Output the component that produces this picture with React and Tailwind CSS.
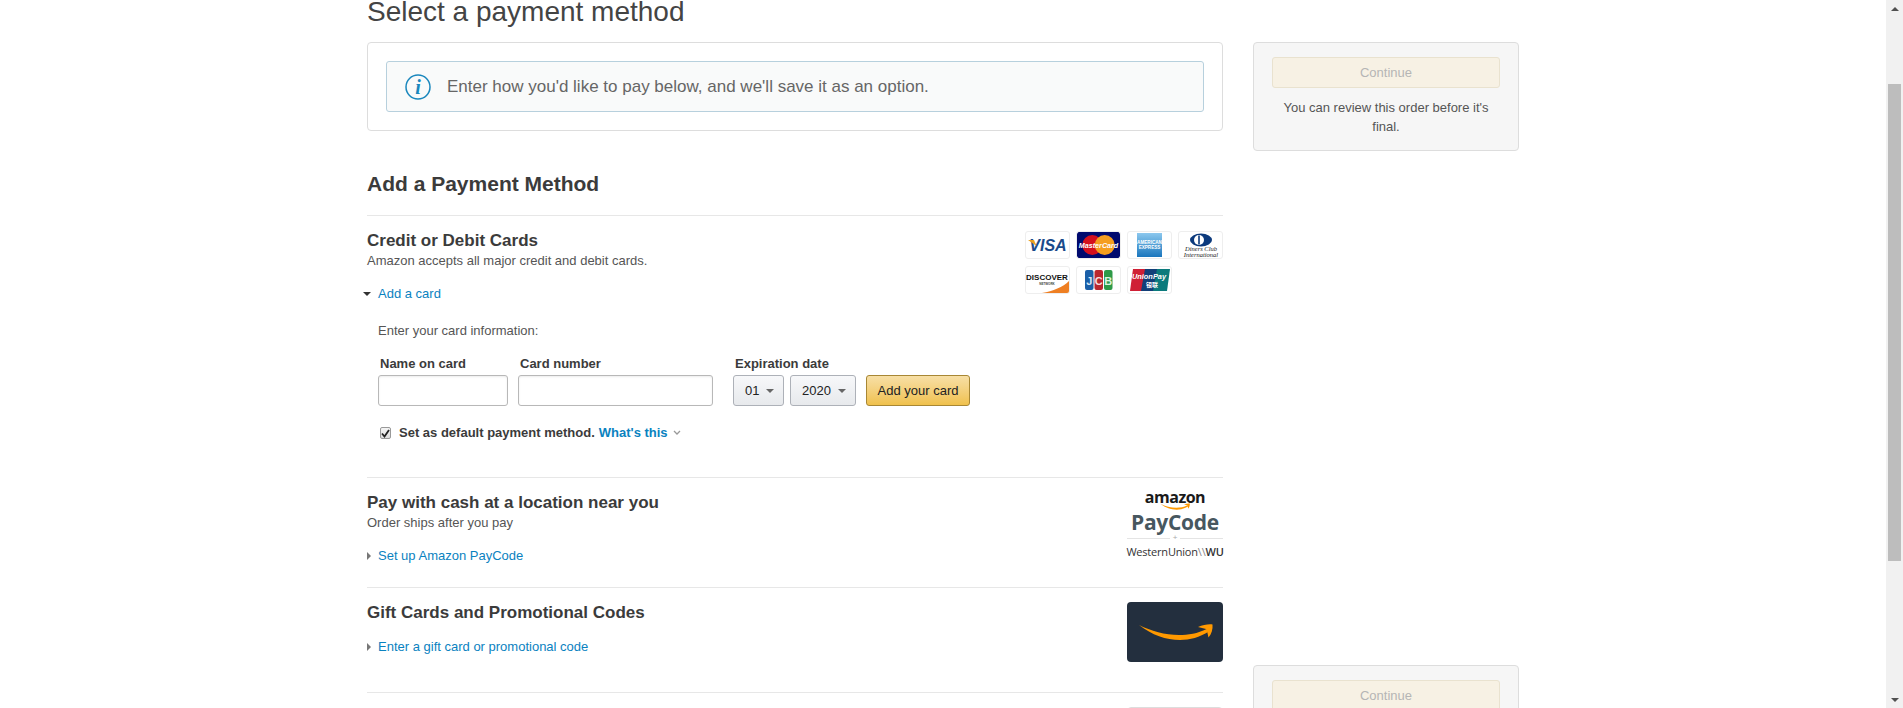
const FONT = "font-['Liberation_Sans',Arial,sans-serif]"

function CardIcon({ children }) {
  return (
    <div className="w-[45px] h-[28px] rounded-[3px] border border-[#eeeeee] bg-white overflow-hidden flex items-center justify-center">
      {children}
    </div>
  )
}

function Visa() {
  return (
    <svg width="43" height="26" viewBox="0 0 43 26">
      <text x="22" y="19" textAnchor="middle" fontFamily="Liberation Sans" fontWeight="700" fontStyle="italic" fontSize="16" fill="#1a4a8a">VISA</text>
      <path d="M2 8h6l2.500 6z" fill="#e8a020" />
    </svg>
  )
}

function MasterCard() {
  return (
    <svg width="45" height="28" viewBox="0 0 45 28">
      <rect width="45" height="28" rx="3" fill="#000a6e" />
      <circle cx="16" cy="14" r="10.5" fill="#d4101e" />
      <circle cx="29" cy="14" r="10.5" fill="#f59e1f" />
      <text x="22.5" y="17" textAnchor="middle" fontFamily="Liberation Sans" fontWeight="700" fontStyle="italic" fontSize="7.5" fill="#fff">MasterCard</text>
    </svg>
  )
}

function Amex() {
  return (
    <svg width="43" height="26" viewBox="0 0 43 26">
      <defs>
        <linearGradient id="amexFill" x1="0" y1="0" x2="0" y2="1">
          <stop offset="0" stopColor="#8cc8ee" />
          <stop offset="1" stopColor="#1a76bd" />
        </linearGradient>
      </defs>
      <rect x="9" y="1" width="25" height="24" fill="url(#amexFill)" />
      <text x="21.5" y="12" textAnchor="middle" fontFamily="Liberation Sans" fontWeight="700" fontSize="4.6" fill="#fff">AMERICAN</text>
      <text x="21.5" y="17" textAnchor="middle" fontFamily="Liberation Sans" fontWeight="700" fontSize="4.6" fill="#fff">EXPRESS</text>
    </svg>
  )
}

function Diners() {
  return (
    <svg width="43" height="26" viewBox="0 0 43 26">
      <ellipse cx="22" cy="8" rx="11" ry="6.5" fill="#0c3a7d" />
      <circle cx="20" cy="8" r="5" fill="#fff" />
      <rect x="19.2" y="3.5" width="1.6" height="9" fill="#0c3a7d" />
      <text x="22" y="19" textAnchor="middle" fontFamily="Liberation Serif" fontStyle="italic" fontSize="6.5" fill="#222">Diners Club</text>
      <text x="22" y="24.5" textAnchor="middle" fontFamily="Liberation Serif" fontStyle="italic" fontSize="6.5" fill="#222">International</text>
    </svg>
  )
}

function Discover() {
  return (
    <svg width="43" height="26" viewBox="0 0 43 26">
      <path d="M43 14v12H16C27 24 37 20 43 14z" fill="#ee7f23" />
      <text x="21" y="13" textAnchor="middle" fontFamily="Liberation Sans" fontWeight="700" fontSize="8" fill="#111">DISCOVER</text>
      <text x="21" y="18" textAnchor="middle" fontFamily="Liberation Sans" fontWeight="700" fontSize="3" fill="#444">NETWORK</text>
    </svg>
  )
}

function Jcb() {
  return (
    <svg width="43" height="26" viewBox="0 0 43 26">
      <rect x="8" y="3" width="8.5" height="20" rx="2" fill="#1b5fa8" />
      <rect x="17.5" y="3" width="8.5" height="20" rx="2" fill="#b9262f" />
      <rect x="27" y="3" width="8.5" height="20" rx="2" fill="#2e9a48" />
      <text x="12.2" y="18" textAnchor="middle" fontFamily="Liberation Sans" fontWeight="700" fontSize="11" fill="#d8e6f5">J</text>
      <text x="21.7" y="18" textAnchor="middle" fontFamily="Liberation Sans" fontWeight="700" fontSize="11" fill="#f5dcdc">C</text>
      <text x="31.2" y="18" textAnchor="middle" fontFamily="Liberation Sans" fontWeight="700" fontSize="11" fill="#dcf5e0">B</text>
    </svg>
  )
}

function UnionPay() {
  return (
    <svg width="43" height="26" viewBox="0 0 43 26">
      <path d="M5 2h14l-4 22H2z" fill="#cf1f35" />
      <path d="M17 2h14l-4 22H13z" fill="#123f78" />
      <path d="M29 2h13l-3 22H25z" fill="#0b7a7c" />
      <text x="21" y="12" textAnchor="middle" fontFamily="Liberation Sans" fontWeight="700" fontStyle="italic" fontSize="7.4" fill="#fff">UnionPay</text>
      <text x="24" y="20" textAnchor="middle" fontFamily="Noto Sans CJK SC" fontWeight="700" fontSize="6" fill="#fff">银联</text>
    </svg>
  )
}

function Smile({ width, height, color = '#ff9900' }) {
  return (
    <svg width={width} height={height} viewBox="0 0 75 16">
      <path d="M1 1C14 11 28 16 42 16c10 0 20-3 28-8l-1.500-3C60 9.500 50 11 41 11 27 11 13 7 1 1z" fill={color} />
      <path d="M60 3C65 1 70 0 74.500 .5 75 5 73.500 10 70.500 13.500L69 7 68 5z" fill={color} />
    </svg>
  )
}

function PayCodeLogo() {
  return (
    <div className="w-[96px] flex flex-col items-center">
      <div className="font-['Open_Sans',sans-serif] font-bold text-[16px] leading-[15px] tracking-[-0.5px] text-[#1a1a1a]">amazon</div>
      <div className="-mt-[2px] h-[7px] flex"><Smile width={30} height={7} /></div>
      <div className="font-['Open_Sans',sans-serif] font-bold text-[21px] leading-[25px] tracking-[-0.3px] text-[#47575f]">PayCode</div>
      <div className="w-full flex items-center gap-[3px] h-[6px]">
        <div className="flex-1 h-px bg-[#e4e4e4]" />
        <span className="text-[8px] leading-[6px] text-[#aaaaaa]">+</span>
        <div className="flex-1 h-px bg-[#e4e4e4]" />
      </div>
      <div className="font-['Open_Sans',sans-serif] text-[11px] leading-[14px] mt-[4px] whitespace-nowrap tracking-[-0.2px] text-[#333333]">
        WesternUnion<span className="text-[#888888]">\\</span><span className="font-semibold">WU</span>
      </div>
    </div>
  )
}

function ArrowRight() {
  return <span className="w-0 h-0 border-y-[4px] border-y-transparent border-l-[4px] border-l-[#777777]" />
}

function Disclosure({ label, open }) {
  return (
    <div className="flex items-center text-[13px] leading-[16px]">
      <span className="w-[11px] flex items-center">
        {open
          ? <span className="w-0 h-0 ml-[-4px] border-x-[4px] border-x-transparent border-t-[4px] border-t-[#333333]" />
          : <ArrowRight />}
      </span>
      <a className="text-[#0a82bf]">{label}</a>
    </div>
  )
}

function Select({ value, width }) {
  return (
    <div className={`${width} h-[31px] flex items-center justify-between pl-[11px] pr-[9px] rounded-[3px] border border-[#adb1b8] bg-gradient-to-b from-[#f7f8fa] to-[#e7e9ec] text-[13px] text-[#222222]`}>
      <span>{value}</span>
      <span className="w-0 h-0 border-x-[4px] border-x-transparent border-t-[4px] border-t-[#666666]" />
    </div>
  )
}

function TextInput({ width }) {
  return <div className={`${width} h-[31px] rounded-[3px] border border-[#b8b8b8] bg-white shadow-[inset_0_1px_2px_rgba(0,0,0,0.08)]`} />
}

function ContinueCard({ children, className = '' }) {
  return (
    <div className={`border border-[#dddddd] rounded-[4px] bg-[#f6f6f6] pt-[14px] px-[18px] pb-[14px] ${className}`}>
      <button className="block w-full h-[31px] rounded-[3px] border border-[#e9e2cf] bg-[#f7f1e4] text-[13px] text-[#b5b5b5]">Continue</button>
      {children}
    </div>
  )
}

export default function App() {
  return (
    <div className={`h-[708px] overflow-hidden flex bg-white text-[#3b3b3b] ${FONT}`}>
      <div className="flex-1 flex pl-[367px] gap-[30px]">
        <main className="w-[856px]">
          <h1 className="h-[42px] text-[28px] leading-[23px] text-[#444444]">Select a payment method</h1>

          <div className="h-[89px] border border-[#dddddd] rounded-[4px] pt-[18px] px-[18px]">
            <div className="h-[51px] border border-[#b7d0dd] rounded-[3px] bg-[#f9fafa] flex items-center pl-[18px]">
              <svg width="26" height="26" viewBox="0 0 26 26" className="text-[#1a87bd]">
                <circle cx="13" cy="13" r="12" fill="none" stroke="currentColor" strokeWidth="1.500" />
                <text x="13" y="20" textAnchor="middle" fontFamily="Liberation Serif" fontStyle="italic" fontWeight="700" fontSize="20" fill="currentColor">i</text>
              </svg>
              <span className="ml-[16px] text-[17px] text-[#666666]">Enter how you'd like to pay below, and we'll save it as an option.</span>
            </div>
          </div>

          <h2 className="mt-[41px] h-[44px] border-b border-[#e7e7e7] text-[21px] leading-[24px] font-bold text-[#3b3b3b]">Add a Payment Method</h2>

          <section className="h-[262px] border-b border-[#e7e7e7] pt-[15px]">
            <div className="flex justify-between">
              <div>
                <h3 className="text-[17px] leading-[20px] font-bold text-[#3b3b3b]">Credit or Debit Cards</h3>
                <p className="text-[13px] leading-[16px] mt-[2px] text-[#555555]">Amazon accepts all major credit and debit cards.</p>
                <div className="mt-[17px]"><Disclosure label="Add a card" open /></div>
              </div>
              <div className="grid grid-cols-4 gap-x-[6px] gap-y-[7px] w-[198px] h-[63px]">
                <CardIcon><Visa /></CardIcon>
                <CardIcon><MasterCard /></CardIcon>
                <CardIcon><Amex /></CardIcon>
                <CardIcon><Diners /></CardIcon>
                <CardIcon><Discover /></CardIcon>
                <CardIcon><Jcb /></CardIcon>
                <CardIcon><UnionPay /></CardIcon>
              </div>
            </div>

            <div className="pl-[11px] mt-[21px]">
              <p className="text-[13px] leading-[16px] text-[#555555]">Enter your card information:</p>
              <div className="flex mt-[17px] items-end">
                <label className="w-[140px]">
                  <span className="block pl-[2px] text-[13px] leading-[16px] font-bold text-[#3b3b3b] mb-[3px]">Name on card</span>
                  <TextInput width="w-[130px]" />
                </label>
                <label className="w-[215px]">
                  <span className="block pl-[2px] text-[13px] leading-[16px] font-bold text-[#3b3b3b] mb-[3px]">Card number</span>
                  <TextInput width="w-[195px]" />
                </label>
                <div>
                  <span className="block pl-[2px] text-[13px] leading-[16px] font-bold text-[#3b3b3b] mb-[3px]">Expiration date</span>
                  <div className="flex gap-[6px]">
                    <Select value="01" width="w-[51px]" />
                    <Select value="2020" width="w-[66px]" />
                  </div>
                </div>
                <button className="ml-[10px] w-[104px] h-[31px] rounded-[3px] border border-[#a88734] bg-gradient-to-b from-[#f7dfa5] to-[#f0c14b] text-[13px] text-[#222222]">Add your card</button>
              </div>
              <div className="flex items-center mt-[19px] pl-[2px] text-[13px] leading-[16px]">
                <span className="w-[11px] h-[12px] rounded-[2px] border border-[#999999] bg-gradient-to-b from-[#f5f5f5] to-[#dddddd] flex items-center justify-center">
                  <svg width="9" height="9" viewBox="0 0 9 9"><path d="M1 4.500l2.500 3L8 1" fill="none" stroke="#222222" strokeWidth="1.800" /></svg>
                </span>
                <span className="ml-[8px] font-bold text-[#3b3b3b]">Set as default payment method.</span>
                <a className="ml-[4px] font-bold text-[#0a82bf]">What's this</a>
                <svg width="8" height="6" viewBox="0 0 8 6" className="ml-[5px]"><path d="M1 1l3 3 3-3" fill="none" stroke="#999999" strokeWidth="1.300" /></svg>
              </div>
            </div>
          </section>

          <section className="h-[110px] border-b border-[#e7e7e7] flex justify-between pt-[15px]">
            <div>
              <h3 className="text-[17px] leading-[20px] font-bold text-[#3b3b3b]">Pay with cash at a location near you</h3>
              <p className="text-[13px] leading-[16px] mt-[2px] text-[#555555]">Order ships after you pay</p>
              <div className="mt-[17px]"><Disclosure label="Set up Amazon PayCode" /></div>
            </div>
            <div className="-mt-[3px]"><PayCodeLogo /></div>
          </section>

          <section className="h-[105px] border-b border-[#e7e7e7] flex justify-between pt-[15px]">
            <div>
              <h3 className="text-[17px] leading-[20px] font-bold text-[#3b3b3b]">Gift Cards and Promotional Codes</h3>
              <div className="mt-[16px]"><Disclosure label="Enter a gift card or promotional code" /></div>
            </div>
            <div className="-mt-[1px] w-[96px] h-[60px] rounded-[4px] bg-[#232f3e] flex items-center justify-center">
              <Smile width={75} height={16} />
            </div>
          </section>

          <div className="flex justify-end mt-[14px]">
            <div className="w-[96px] h-[60px] rounded-[4px] border border-[#dddddd]" />
          </div>
        </main>

        <aside className="w-[266px] pt-[42px]">
          <ContinueCard>
            <p className="mt-[10px] text-center text-[13px] leading-[19px] text-[#555555]">You can review this order before it's final.</p>
          </ContinueCard>
          <ContinueCard className="mt-[514px]" />
        </aside>
      </div>

      <div className="w-[17px] bg-[#f1f1f1] flex flex-col items-center">
        <span className="mt-[7px] w-0 h-0 border-x-[4px] border-x-transparent border-b-[4px] border-b-[#505050]" />
        <div className="mt-[73px] w-[13px] h-[477px] bg-[#bdbdbd]" />
        <span className="mt-[137px] w-0 h-0 border-x-[4px] border-x-transparent border-t-[4px] border-t-[#505050]" />
      </div>
    </div>
  )
}
